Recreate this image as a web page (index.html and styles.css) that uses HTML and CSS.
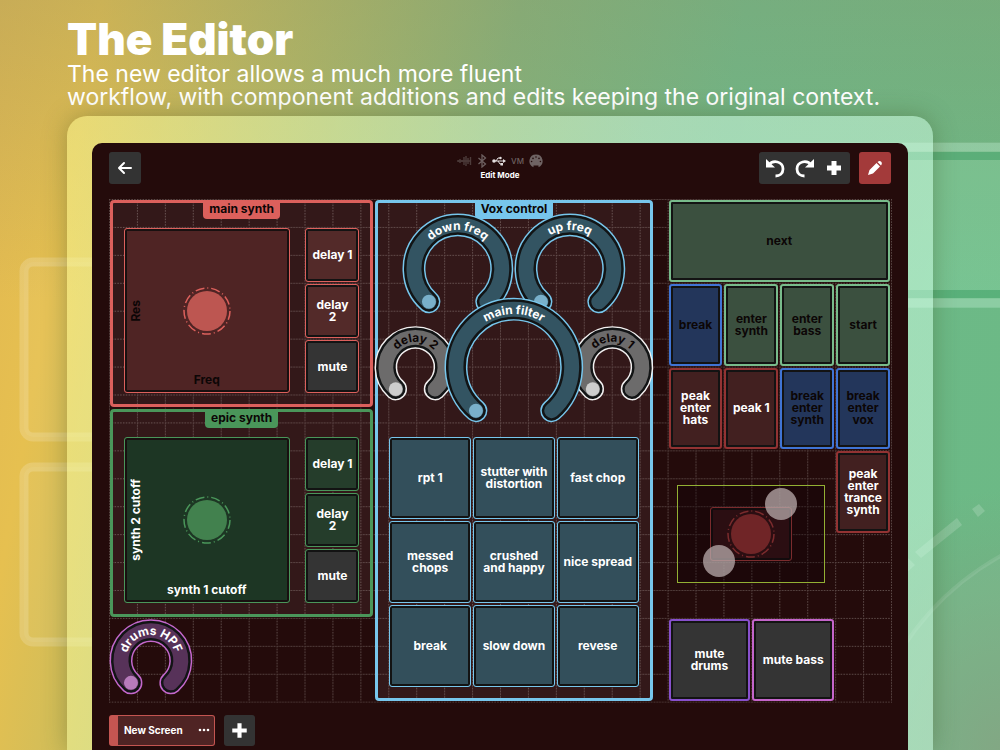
FILE: index.html
```html
<!DOCTYPE html>
<html lang="en">
<head>
<meta charset="utf-8">
<meta name="viewport" content="width=device-width, initial-scale=1">
<title>The Editor</title>
<link rel="stylesheet" href="styles.css">
</head>
<body>
<svg class="backdrop" viewBox="0 0 1000 750" preserveAspectRatio="xMidYMin slice" aria-hidden="true">
  <g fill="#fff" fill-opacity=".05" stroke="#fff" stroke-opacity=".17" stroke-width="9">
    <rect x="24" y="262" width="300" height="175" rx="9"/>
    <rect x="24" y="467" width="300" height="175" rx="9"/>
  </g>
  <rect x="800" y="143" width="200" height="165" fill="#a4f0c4" fill-opacity=".2"/>
  <path d="M800 147H1000M800 303H1000" stroke="#fff" stroke-opacity=".16" stroke-width="9"/>
  <path d="M800 156H1000M800 294H1000" stroke="#30965a" stroke-opacity=".42" stroke-width="8"/>
  <g fill="#fff" fill-opacity=".17">
    <path d="M915 552L957 518L962 525L921 558Z"/>
    <path d="M972 509L979 504L985 511L978 517Z"/>
    <path d="M895 568L908 558L915 565L902 577Z"/>
  </g>
  <path d="M880 690Q920 600 1004 554V750H880Z" fill="#fff" fill-opacity=".05"/>
  <path d="M880 690Q920 600 1004 554" fill="none" stroke="#fff" stroke-opacity=".1" stroke-width="4"/>
</svg>

<div class="page">
  <header class="intro">
    <h1>The Editor</h1>
    <p>The new editor allows a much more fluent<br>workflow, with component additions and edits keeping the original context.</p>
  </header>

  <main class="frame">
    <div class="screen">
      <div class="topbar">
        <div class="topbar-side">
          <button class="tool" aria-label="Back">
            <svg viewBox="0 0 32 32"><path d="M22 16H11M15 11L10 16L15 21" fill="none" stroke="#fff" stroke-width="2" stroke-linecap="round" stroke-linejoin="round"/></svg>
          </button>
        </div>
        <div class="status">
          <div class="status-icons">
            <svg width="15" height="12" viewBox="0 0 15 12" aria-label="Audio"><path d="M1 5V7M3 4V8M5 5V7M7 2V10M9 1V11M11 3V9M13.500 2V10M1 6H13" stroke="#4d3c3b" stroke-width="1.400" fill="none"/></svg>
            <svg width="10" height="14" viewBox="0 0 10 14" aria-label="Bluetooth"><path d="M1.500 4L8.500 10L5 13V1L8.500 4L1.500 10" fill="none" stroke="#6d6060" stroke-width="1.300"/></svg>
            <svg width="14" height="10" viewBox="0 0 14 10" aria-label="USB"><g fill="none" stroke="#e4dfdf" stroke-width="1"><path d="M2 5H12M4 5L6 2H8M6 5L8 8H9"/></g><circle cx="2" cy="5" r="1.800" fill="#e4dfdf"/><circle cx="8.500" cy="2" r="1.200" fill="#e4dfdf"/><path d="M8.500 7H11V9.500H8.500ZM11 3L14 5L11 7Z" fill="#e4dfdf"/></svg>
            <span class="vm">VM</span>
            <svg width="14" height="14" viewBox="0 0 14 14" aria-label="MIDI"><path d="M7 .5A6.600 6.600 0 0 0 4.500 13.200V11.500H9.500V13.200A6.600 6.600 0 0 0 7 .5Z" fill="#6f6363"/><g fill="#240b0b"><circle cx="2.600" cy="7.500" r=".8"/><circle cx="11.400" cy="7.500" r=".8"/><circle cx="4" cy="4.400" r=".8"/><circle cx="10" cy="4.400" r=".8"/><circle cx="7" cy="3" r=".8"/></g></svg>
          </div>
          <span class="mode">Edit Mode</span>
        </div>
        <div class="topbar-side topbar-end">
          <div class="tool-group">
            <button aria-label="Undo"><svg viewBox="0 0 20 20"><path d="M3.500 7.500C8 1 18 3.500 18 11C18 15.500 14.500 18 10.500 18" fill="none" stroke="#fff" stroke-width="2.800"/><path d="M1 1V9.500H10Z" fill="#fff"/></svg></button>
            <button aria-label="Redo"><svg viewBox="0 0 20 20"><path d="M16.500 7.500C12 1 2 3.500 2 11C2 15.500 5.500 18 9.500 18" fill="none" stroke="#fff" stroke-width="2.800"/><path d="M19 1V9.500H10Z" fill="#fff"/></svg></button>
            <button aria-label="Add component"><svg viewBox="0 0 20 20"><path d="M10 3V17M3 10H17" stroke="#fff" stroke-width="5"/></svg></button>
          </div>
          <button class="tool tool-edit" aria-label="Edit">
            <svg viewBox="0 0 32 32"><path d="M9 23L10.500 18L17.500 11L21 14.500L14 21.500ZM18.500 10L19.700 9.200Q21 8.600 22.200 9.800Q23.400 11 22.600 12.500L22 13.500Z" fill="#fff"/></svg>
          </button>
        </div>
      </div>

      <div class="canvas">
        <svg class="grid-lines" viewBox="0 0 784 504" preserveAspectRatio="none" aria-hidden="true">
          <defs><pattern id="cell" width="28" height="28" patternUnits="userSpaceOnUse"><path d="M.5 0V28M0 .5H28" stroke="#5e4c4a" stroke-dasharray="1.500 1.300"/></pattern></defs>
          <rect width="785" height="505" fill="url(#cell)"/>
        </svg>

        <section class="group red group-main" aria-label="main synth">
          <h2 class="tag">main synth</h2>
          <div class="pad pad-group dark-label">
            <span class="axis-y">Res</span>
            <svg class="stick" viewBox="0 0 48 48"><circle class="stick-ring" cx="24" cy="24" r="23"/><circle class="stick-disc" cx="24" cy="24" r="20"/></svg>
            <span class="axis-x">Freq</span>
          </div>
          <button class="key key-a">delay 1</button>
          <button class="key key-b">delay 2</button>
          <button class="key key-c off">mute</button>
        </section>

        <section class="group green group-epic" aria-label="epic synth">
          <h2 class="tag">epic synth</h2>
          <div class="pad pad-group">
            <span class="axis-y">synth 2 cutoff</span>
            <svg class="stick" viewBox="0 0 48 48"><circle class="stick-ring" cx="24" cy="24" r="23"/><circle class="stick-disc" cx="24" cy="24" r="20"/></svg>
            <span class="axis-x">synth 1 cutoff</span>
          </div>
          <button class="key key-a">delay 1</button>
          <button class="key key-b">delay 2</button>
          <button class="key key-c off">mute</button>
        </section>

        <section class="group blue group-vox" aria-label="Vox control">
          <h2 class="tag">Vox control</h2>
          <div class="knob knob-down">
            <svg viewBox="0 0 110 110"><path class="ring-edge" d="M26 88A44 44 0 1 1 84 88"/><path class="ring-gap" d="M26 88A44 44 0 1 1 84 88"/><path class="ring-fill" d="M26 88A44 44 0 1 1 84 88"/><circle class="dot" cx="26" cy="88" r="7"/><path id="arc-m" d="M16 55A39 39 0 0 1 94 55" fill="none"/><text><textPath href="#arc-m" startOffset="50%">down freq</textPath></text></svg>
            <input type="range" aria-label="down freq" value="0">
          </div>
          <div class="knob knob-up">
            <svg viewBox="0 0 110 110"><path class="ring-edge" d="M26 88A44 44 0 1 1 84 88"/><path class="ring-gap" d="M26 88A44 44 0 1 1 84 88"/><path class="ring-fill" d="M26 88A44 44 0 1 1 84 88"/><circle class="dot" cx="26" cy="88" r="7"/><text><textPath href="#arc-m" startOffset="50%">up freq</textPath></text></svg>
            <input type="range" aria-label="up freq" value="0">
          </div>
          <div class="knob knob-d2 grey dark-label">
            <svg viewBox="0 0 82 82"><path class="ring-edge" d="M21 64A30 30 0 1 1 61 64"/><path class="ring-gap" d="M21 64A30 30 0 1 1 61 64"/><path class="ring-fill" d="M21 64A30 30 0 1 1 61 64"/><circle class="dot" cx="21" cy="64" r="7"/><path id="arc-s" d="M16 41A25 25 0 0 1 66 41" fill="none"/><text><textPath href="#arc-s" startOffset="50%">delay 2</textPath></text></svg>
            <input type="range" aria-label="delay 2" value="0">
          </div>
          <div class="knob knob-d1 grey dark-label">
            <svg viewBox="0 0 82 82"><path class="ring-edge" d="M21 64A30 30 0 1 1 61 64"/><path class="ring-gap" d="M21 64A30 30 0 1 1 61 64"/><path class="ring-fill" d="M21 64A30 30 0 1 1 61 64"/><circle class="dot" cx="21" cy="64" r="7"/><text><textPath href="#arc-s" startOffset="50%">delay 1</textPath></text></svg>
            <input type="range" aria-label="delay 1" value="0">
          </div>
          <div class="knob knob-filter">
            <svg viewBox="0 0 138 138"><path class="ring-edge" d="M31 113A58 58 0 1 1 107 113"/><path class="ring-gap" d="M31 113A58 58 0 1 1 107 113"/><path class="ring-fill" d="M31 113A58 58 0 1 1 107 113"/><circle class="dot" cx="31" cy="113" r="7"/><path id="arc-l" d="M16 69A53 53 0 0 1 122 69" fill="none"/><text><textPath href="#arc-l" startOffset="50%">main filter</textPath></text></svg>
            <input type="range" aria-label="main filter" value="0">
          </div>
          <div class="bank">
            <button class="key">rpt 1</button>
            <button class="key">stutter with distortion</button>
            <button class="key">fast chop</button>
            <button class="key">messed chops</button>
            <button class="key">crushed and happy</button>
            <button class="key">nice spread</button>
            <button class="key">break</button>
            <button class="key">slow down</button>
            <button class="key">revese</button>
          </div>
        </section>

        <div class="scenes">
          <button class="key mint dark-label scene-next">next</button>
          <button class="key navy dark-label">break</button>
          <button class="key mint dark-label">enter synth</button>
          <button class="key mint dark-label">enter bass</button>
          <button class="key mint dark-label">start</button>
          <button class="key crimson">peak enter hats</button>
          <button class="key crimson">peak 1</button>
          <button class="key navy dark-label">break enter synth</button>
          <button class="key navy dark-label">break enter vox</button>
          <button class="key crimson scene-last">peak enter trance synth</button>
        </div>

        <div class="pad pad-selected">
          <svg class="stick" viewBox="0 0 48 48"><circle class="stick-ring" cx="24" cy="24" r="23"/><circle class="stick-disc" cx="24" cy="24" r="20"/></svg>
          <div class="selection"><span class="handle handle-ne"></span><span class="handle handle-sw"></span></div>
        </div>

        <button class="key purple off key-drums">mute drums</button>
        <button class="key pink off key-bass">mute bass</button>

        <div class="knob knob-hpf plum">
          <svg viewBox="0 0 82 82"><path class="ring-edge" d="M21 64A30 30 0 1 1 61 64"/><path class="ring-gap" d="M21 64A30 30 0 1 1 61 64"/><path class="ring-fill" d="M21 64A30 30 0 1 1 61 64"/><circle class="dot" cx="21" cy="64" r="7"/><text><textPath href="#arc-s" startOffset="50%">drums HPF</textPath></text></svg>
          <input type="range" aria-label="drums HPF" value="0">
        </div>
      </div>

      <nav class="tabs" aria-label="Screens">
        <button class="tab"><span>New Screen</span><svg width="12" height="4" viewBox="0 0 12 4" aria-hidden="true"><g fill="#fff"><circle cx="2" cy="2" r="1.300"/><circle cx="6" cy="2" r="1.300"/><circle cx="10" cy="2" r="1.300"/></g></svg></button>
        <button class="tab-add" aria-label="Add screen"><svg viewBox="0 0 30 30"><path d="M15 8V22M8 15H22" stroke="#fff" stroke-width="4"/></svg></button>
      </nav>
    </div>
  </main>
</div>
</body>
</html>
```
FILE: styles.css
```css
* { box-sizing: border-box; }

body {
  margin: 0;
  overflow: hidden;
  color: #fff;
  font-family: Inter, "Open Sans", sans-serif;
  background:
    radial-gradient(ellipse 200px 260px at 100% 100%, rgba(128, 158, 124, .8), transparent),
    linear-gradient(180deg, rgba(140, 145, 100, .3), transparent 40%),
    linear-gradient(100deg, #e2b851 0%, #e6c050 9%, #bdbb62 24%, #85b47c 46%, #6dba8a 66%, #6cb985 100%);
}

button {
  margin: 0;
  padding: 0;
  border: 0;
  color: inherit;
  font: inherit;
  background: none;
}

svg { display: block; }

.backdrop {
  position: absolute;
  inset: 0;
  width: 100%;
  height: 100%;
}

.page {
  position: relative;
  display: flex;
  flex-direction: column;
  min-height: 100vh;
  padding: 0 67px;
}

.intro { padding: 16px 0 7px; }

.intro h1 {
  margin: 0;
  font-size: 44px;
  font-weight: 900;
  line-height: 47px;
}

.intro p {
  margin: 0;
  font-size: 23px;
  line-height: 23px;
  white-space: nowrap;
}

.frame {
  flex: 1;
  display: flex;
  padding: 27px 25px 0;
  border-radius: 20px 20px 0 0;
  background: linear-gradient(100deg, rgba(255, 255, 150, .48), rgba(230, 255, 190, .5) 30%, rgba(215, 255, 230, .5) 60%, rgba(206, 255, 228, .52));
  box-shadow: 0 0 24px rgba(60, 80, 30, .35);
}

.screen {
  flex: 1;
  min-width: 0;
  padding: 9px 17px 0;
  border-radius: 10px 10px 0 0;
  background: #240b0b;
}

.topbar {
  display: flex;
  height: 47px;
  align-items: flex-start;
}

.topbar-side { flex: 1; display: flex; }
.topbar-end { justify-content: flex-end; gap: 9px; }

.tool {
  width: 32px;
  height: 32px;
  border-radius: 3px;
  background: #333;
}

.tool-edit { background: #a33a3a; }

.tool-group {
  display: flex;
  align-items: center;
  justify-content: space-between;
  width: 91px;
  height: 32px;
  padding: 0 6px;
  border-radius: 3px;
  background: #333;
}

.tool-group button { width: 20px; height: 20px; }

.status {
  display: flex;
  flex-direction: column;
  align-items: center;
}

.status-icons {
  display: flex;
  align-items: center;
  gap: 5px;
  height: 18px;
}

.vm { color: #6d6060; font-size: 8px; font-weight: 500; }
.mode { font-size: 8px; font-weight: 700; line-height: 11px; }

/* Components snap to half cells of the visible 28 x 18 grid. */
.canvas {
  position: relative;
  isolation: isolate;
  display: grid;
  grid-template-columns: repeat(56, minmax(0, 1fr));
  grid-template-rows: repeat(36, minmax(0, 1fr));
  aspect-ratio: 28 / 18;
  min-height: 0;
  font-size: 12px;
  font-weight: 700;
  line-height: 12px;
}

.grid-lines {
  position: absolute;
  z-index: -1;
  inset: 0;
  width: 100%;
  height: 100%;
  overflow: visible;
}

.red { --edge: #dc605c; --fill: #4f2424; --key: #532a29; --disc: #bd5651; }
.green { --edge: #4a965a; --fill: #1d3624; --key: #253d2b; --disc: #42814e; }
.blue { --edge: #77c6ec; --fill: #335462; --key: #334f5b; --disc: #79b0ca; }
.grey { --edge: #f2f0f0; --fill: #6c6b6b; --disc: #cdcdcd; }
.plum { --edge: #c468cc; --fill: #573259; --disc: #b77bbb; }
.mint { --edge: #78bb8b; --key: #3b503f; }
.navy { --edge: #4074d4; --key: #23365b; }
.crimson { --edge: #933333; --key: #422020; }
.purple { --edge: #8850cc; }
.pink { --edge: #c465ca; }
.key.off { --key: #343434; }

.group {
  position: relative;
  display: grid;
  grid-template-columns: subgrid;
  grid-template-rows: subgrid;
  margin: 1px;
  border: 3px solid var(--edge);
  border-radius: 4px;
  background: rgba(255, 200, 215, .07);
}

.group-main { grid-area: 1 / 1 / 16 / 20; }
.group-epic { grid-area: 16 / 1 / 31 / 20; }
.group-vox { grid-area: 1 / 20 / 37 / 40; }

.tag {
  grid-area: 1 / 1 / 3 / -1;
  place-self: start center;
  margin: 0;
  padding: 0 6px 4px;
  border-radius: 0 0 4px 4px;
  color: #0c0606;
  font-size: 12px;
  line-height: 12px;
  background: var(--edge);
}

.key {
  margin: 1px;
  padding: 0 4px;
  border: 1px solid var(--edge);
  border-radius: 3px;
  background: var(--key);
  box-shadow: inset 0 0 0 2px #131313;
  text-align: center;
}

.dark-label { color: #0c0606; }

.key-a { grid-area: 3 / 15 / 7 / 19; }
.key-b { grid-area: 7 / 15 / 11 / 19; padding: 0 8px; }
.key-c { grid-area: 11 / 15 / 15 / 19; }

.pad {
  position: relative;
  display: grid;
  margin: 1px;
  border: 1px solid var(--edge);
  border-radius: 3px;
  background: var(--fill);
  box-shadow: inset 0 0 0 2px #181010;
}

.pad > * { grid-area: 1 / 1; }
.pad-group { grid-area: 3 / 2 / 15 / 14; }

.stick {
  place-self: center;
  width: 48px;
  height: 48px;
}

.stick-disc { fill: var(--disc); }
.stick-ring { fill: none; stroke: var(--edge); stroke-width: 1.5; stroke-dasharray: 9 3 1 3; }

.axis-x { place-self: end center; padding-bottom: 6px; }

.axis-y {
  place-self: center start;
  padding-right: 5px;
  writing-mode: vertical-rl;
  transform: rotate(180deg);
}

.knob { position: relative; margin: 1px; }
.knob svg { width: 100%; overflow: visible; }

.knob input {
  position: absolute;
  inset: 0;
  width: 100%;
  height: 100%;
  margin: 0;
  opacity: 0;
}

.knob text { fill: currentColor; text-anchor: middle; }
.ring-edge, .ring-gap, .ring-fill { fill: none; stroke-linecap: round; }
.ring-edge { stroke: var(--edge); stroke-width: 23; }
.ring-gap { stroke: #121415; stroke-width: 20; }
.ring-fill { stroke: var(--fill); stroke-width: 15; }
.dot { fill: var(--disc); }

.knob-down { grid-area: 2 / 3 / 10 / 11; }
.knob-up { grid-area: 2 / 11 / 10 / 19; }
.knob-d2 { grid-area: 10 / 1 / 16 / 7; margin-left: -3px; margin-right: 2px; }
.knob-d1 { grid-area: 10 / 15 / 16 / 21; margin-left: 2px; margin-right: -3px; }
.knob-filter { grid-area: 8 / 6 / 18 / 16; }
.knob-hpf { grid-area: 31 / 1 / 37 / 7; }

.bank {
  grid-area: 18 / 2 / 36 / 20;
  display: grid;
  grid-template-columns: repeat(3, minmax(0, 1fr));
  grid-template-rows: repeat(3, minmax(0, 1fr));
}

.scenes {
  grid-area: 1 / 41 / 25 / 57;
  display: grid;
  grid-template-columns: repeat(4, minmax(0, 1fr));
  grid-template-rows: repeat(4, minmax(0, 1fr));
}

.scenes .key { border-width: 2px; }
.scene-next { grid-column: 1 / -1; }
.scene-last { grid-column: 4; }

.key-drums { grid-area: 31 / 41 / 37 / 47; }
.key-bass { grid-area: 31 / 47 / 37 / 53; }
.key-drums, .key-bass { border-width: 2px; }
.key-drums { padding: 0 16px; }

.pad-selected {
  --edge: #ac3e3e;
  --fill: #3a1517;
  --disc: #9c3636;
  grid-area: 23 / 44 / 27 / 50;
}

.selection {
  position: absolute;
  inset: -23px -34px;
  border: 1px solid #93b033;
  background: rgba(10, 0, 5, .3);
}

.handle {
  position: absolute;
  width: 32px;
  height: 32px;
  border-radius: 50%;
  background: rgba(185, 172, 172, .75);
}

.handle-ne { top: 2px; right: 27px; }
.handle-sw { bottom: 5px; left: 25px; }

.tabs {
  display: flex;
  gap: 9px;
  padding-top: 13px;
}

.tab {
  display: flex;
  align-items: center;
  justify-content: space-between;
  width: 106px;
  height: 31px;
  padding: 0 4px 0 6px;
  border: 1px solid #c45551;
  border-left-width: 9px;
  border-radius: 3px;
  background: #4f2424;
  font-size: 10px;
  font-weight: 700;
}

.tab-add {
  width: 31px;
  height: 31px;
  border-radius: 3px;
  background: #333;
}
```
